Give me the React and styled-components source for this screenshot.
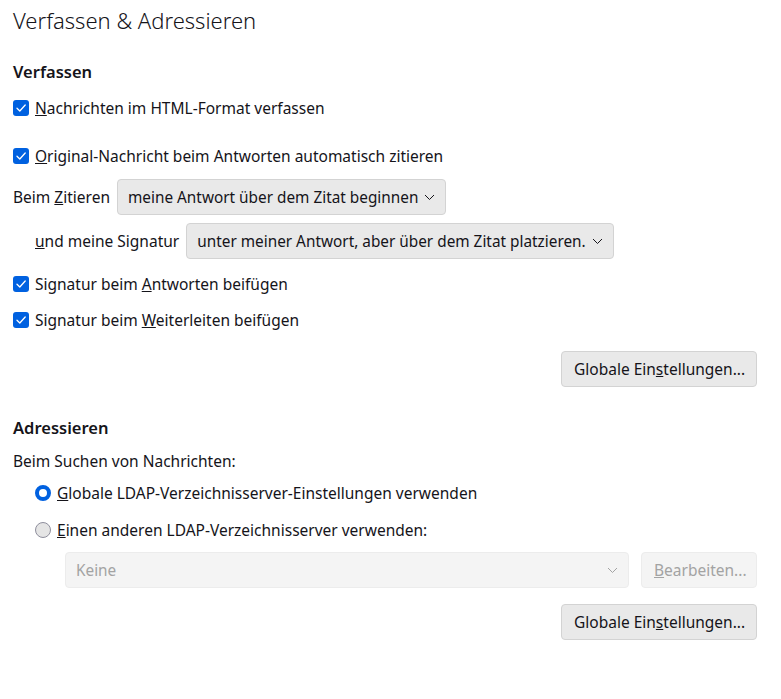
import React from "react";
import styled, { createGlobalStyle } from "styled-components";

const Global = createGlobalStyle`
  html, body { margin: 0; padding: 0; background: #ffffff; }
  body { font-family: "Noto Sans", "Open Sans", sans-serif; color: #15141a; }
`;

const Page = styled.div`
  width: 781px;
  height: 699px;
  box-sizing: border-box;
  padding: 0 24px 0 13px;
  display: flex;
  flex-direction: column;
  font-size: 15.5px;
`;

const Title = styled.h1`
  margin: 0;
  height: 40px;
  line-height: 40px;
  font-size: 22px;
  font-weight: 300;
  color: #15141a;
`;

const Heading = styled.h2`
  margin: ${(p) => p.$mt}px 0 0;
  height: 24px;
  line-height: 24px;
  font-size: 16.5px;
  font-weight: 600;
`;

const Row = styled.div`
  display: flex;
  align-items: center;
  gap: ${(p) => p.$gap ?? 6}px;
  height: ${(p) => p.$h ?? 36}px;
  margin-top: ${(p) => p.$mt ?? 0}px;
  padding-left: ${(p) => p.$indent ?? 0}px;
  justify-content: ${(p) => (p.$end ? "flex-end" : "flex-start")};
`;

const Label = styled.span`
  line-height: 20px;
  white-space: nowrap;
`;

const Box = styled.span`
  width: 16px;
  height: 16px;
  box-sizing: border-box;
  border-radius: 3px;
  background: #0061e0;
  display: inline-flex;
  align-items: center;
  justify-content: center;
  flex: none;
`;

const Radio = styled.span`
  width: 16px;
  height: 16px;
  box-sizing: border-box;
  border-radius: 50%;
  flex: none;
  border: ${(p) => (p.$on ? "4px solid #0061e0" : "1px solid #8f8f9d")};
  background: ${(p) => (p.$on ? "#ffffff" : "#e5e5e5")};
`;

const Select = styled.div`
  display: flex;
  align-items: center;
  justify-content: space-between;
  gap: 6px;
  box-sizing: border-box;
  height: 36px;
  padding: 0 10px 0 10px;
  font-size: 15.35px;
  border: 1px solid ${(p) => (p.$disabled ? "#ececec" : "#d3d3d3")};
  border-radius: 4px;
  background: ${(p) => (p.$disabled ? "#f4f4f4" : "#e9e9e9")};
  color: ${(p) => (p.$disabled ? "#a3a3a3" : "#15141a")};
  flex: ${(p) => (p.$grow ? "1" : "none")};
  white-space: nowrap;
`;

const Button = styled.button`
  font: inherit;
  height: 36px;
  box-sizing: border-box;
  padding: 0 12px;
  border: 1px solid ${(p) => (p.$disabled ? "#ececec" : "#d3d3d3")};
  border-radius: 4px;
  background: ${(p) => (p.$disabled ? "#f4f4f4" : "#e9e9e9")};
  color: ${(p) => (p.$disabled ? "#a3a3a3" : "#15141a")};
  width: ${(p) => p.$w}px;
  white-space: nowrap;
  flex: none;
`;

const Check = () => (
  <Box>
    <svg width="12" height="12" viewBox="0 0 12 12">
      <path d="M2 6.3 L4.8 9 L10.2 3" fill="none" stroke="#fff" strokeWidth="1.3" strokeLinecap="round" strokeLinejoin="round" />
    </svg>
  </Box>
);

const Chevron = ({ color = "#15141a" }) => (
  <svg width="11" height="7" viewBox="0 0 11 7" style={{ flex: "none" }}>
    <path d="M1 1 L5.5 5.5 L10 1" fill="none" stroke={color} strokeWidth="1" />
  </svg>
);

export default function App() {
  return (
    <>
      <Global />
      <Page>
        <Title>Verfassen &amp; Adressieren</Title>
        <Heading $mt={20}>Verfassen</Heading>
        <Row $mt={6}>
          <Check />
          <Label><u>N</u>achrichten im HTML-Format verfassen</Label>
        </Row>
        <Row $mt={12}>
          <Check />
          <Label><u>O</u>riginal-Nachricht beim Antworten automatisch zitieren</Label>
        </Row>
        <Row $mt={5} $gap={7}>
          <Label>Beim <u>Z</u>itieren</Label>
          <Select>
            <span>meine Antwort über dem Zitat beginnen</span>
            <Chevron />
          </Select>
        </Row>
        <Row $mt={8} $gap={7} $indent={22}>
          <Label><u>u</u>nd meine Signatur</Label>
          <Select>
            <span>unter meiner Antwort, aber über dem Zitat platzieren.</span>
            <Chevron />
          </Select>
        </Row>
        <Row $mt={7}>
          <Check />
          <Label>Signatur beim <u>A</u>ntworten beifügen</Label>
        </Row>
        <Row>
          <Check />
          <Label>Signatur beim <u>W</u>eiterleiten beifügen</Label>
        </Row>
        <Row $mt={13} $end>
          <Button $w={196}>Globale Ein<u>s</u>tellungen...</Button>
        </Row>
        <Heading $mt={29}>Adressieren</Heading>
        <Row $mt={9} $h={24}>
          <Label>Beim Suchen von Nachrichten:</Label>
        </Row>
        <Row $mt={2} $indent={22}>
          <Radio $on />
          <Label><u>G</u>lobale LDAP-Verzeichnisserver-Einstellungen verwenden</Label>
        </Row>
        <Row $mt={1} $indent={22}>
          <Radio />
          <Label><u>E</u>inen anderen LDAP-Verzeichnisserver verwenden:</Label>
        </Row>
        <Row $mt={4} $indent={52} $gap={12}>
          <Select $disabled $grow>
            <span>Keine</span>
            <Chevron color="#a3a3a3" />
          </Select>
          <Button $disabled $w={116}><u>B</u>earbeiten...</Button>
        </Row>
        <Row $mt={16} $end>
          <Button $w={196}>Globale Ein<u>s</u>tellungen...</Button>
        </Row>
      </Page>
    </>
  );
}
